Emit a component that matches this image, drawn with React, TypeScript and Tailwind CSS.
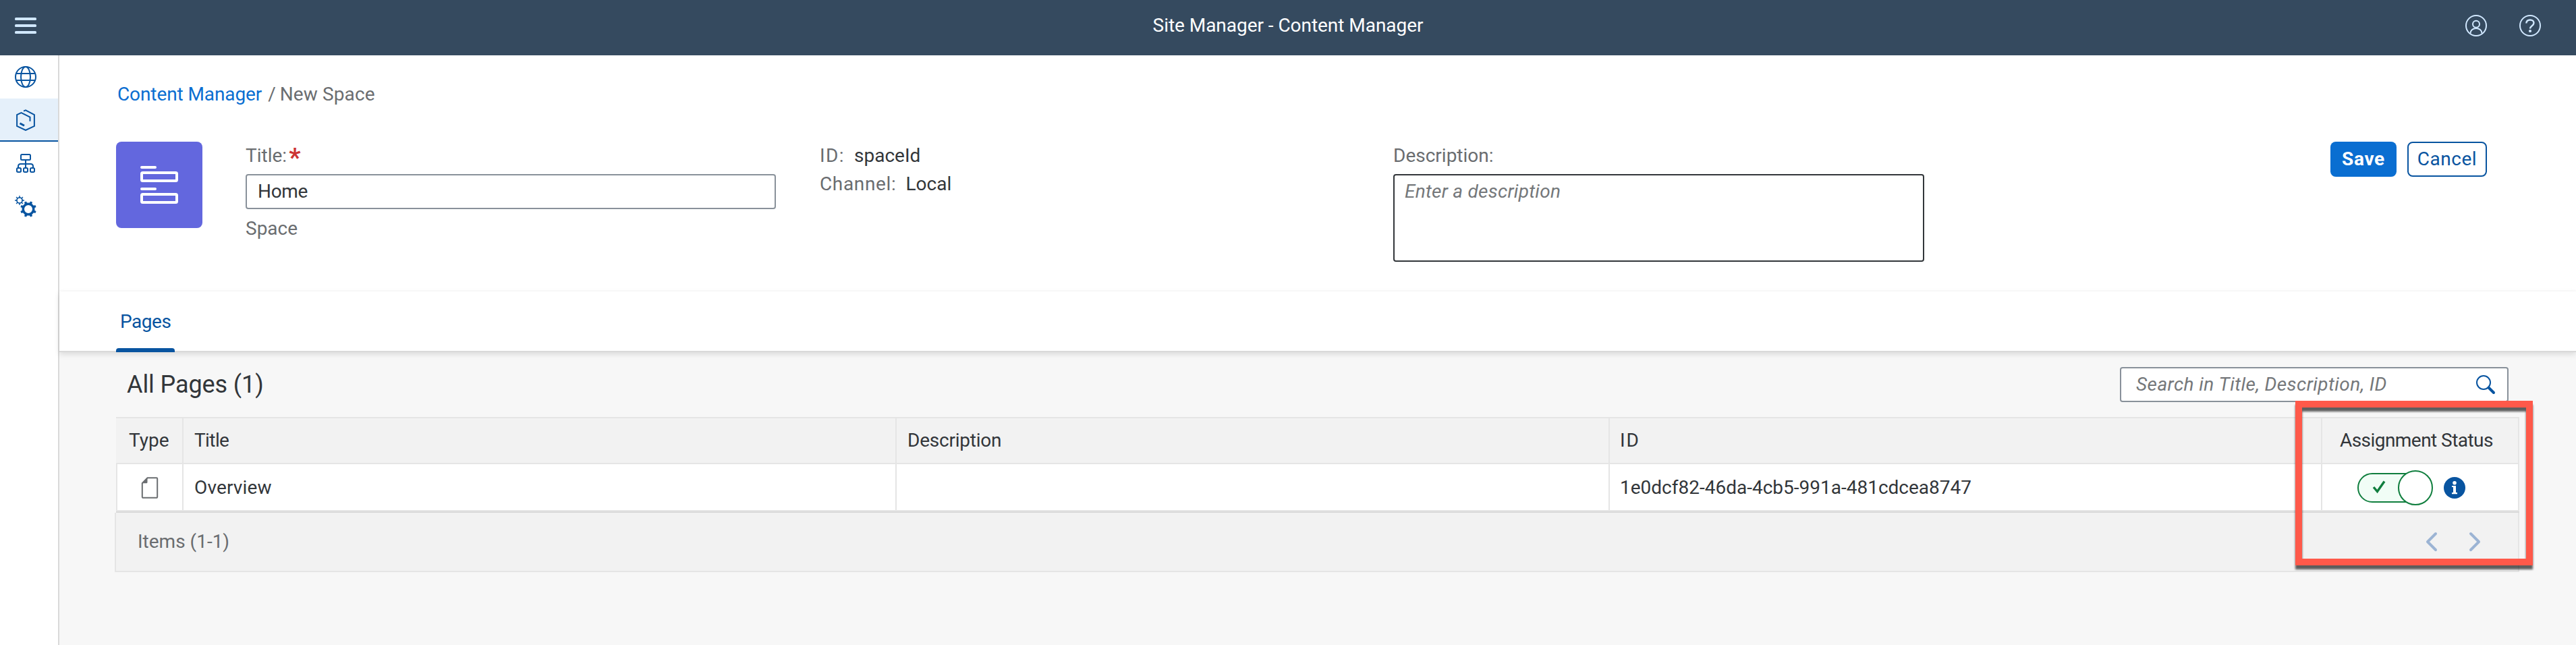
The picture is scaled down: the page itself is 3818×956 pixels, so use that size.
import type { ReactNode } from 'react';

function Icon({ children, className = '' }: { children: ReactNode; className?: string }) {
  return (
    <svg viewBox="0 0 32 32" fill="none" stroke="currentColor" strokeWidth="2" className={`size-8 shrink-0 ${className}`}>
      {children}
    </svg>
  );
}

function gearPath(cx: number, cy: number, outer: number, inner: number, teeth: number, offset: number, tip: number, root: number) {
  const step = (Math.PI * 2) / teeth;
  const at = (r: number, a: number) => `${(cx + r * Math.cos(a)).toFixed(2)} ${(cy + r * Math.sin(a)).toFixed(2)}`;
  let d = '';
  for (let i = 0; i < teeth; i++) {
    const a = i * step + offset;
    d += `${i ? 'L' : 'M'}${at(inner, a - step * root)}L${at(outer, a - step * tip)}L${at(outer, a + step * tip)}L${at(inner, a + step * root)}`;
  }
  return d + 'Z';
}

function ShellBar() {
  return (
    <header className="grid h-[82px] grid-cols-[1fr_auto_1fr] items-start bg-[#354a5f] pt-[22px] text-[#d1e8ff]">
      <Icon className="ml-[22px]">
        <g fill="currentColor" stroke="none">
          <rect x="0" y="4" width="32" height="4" rx="1.6" />
          <rect x="0" y="14" width="32" height="4" rx="1.6" />
          <rect x="0" y="24" width="32" height="4" rx="1.6" />
        </g>
      </Icon>
      <h1 className="tracking-[-0.04px] text-white">Site Manager - Content Manager</h1>
      <div className="flex justify-end gap-12 pr-[52px]">
        <Icon>
          <circle cx="16" cy="16" r="15" />
          <circle cx="16" cy="13.7" r="5" />
          <path d="M7.5 27.5c0-4.5 3.7-7.5 8.5-7.5s8.5 3 8.5 7.5" />
        </Icon>
        <Icon>
          <circle cx="16" cy="16" r="15" />
          <path d="M10.3 12.5C10.5 9.3 12.7 7.5 16 7.5c3.3 0 5.5 1.9 5.5 4.6 0 4.3-5.5 3.9-5.5 8.4" strokeWidth="2.4" />
          <circle cx="16" cy="24" r="2.1" fill="currentColor" stroke="none" />
        </Icon>
      </div>
    </header>
  );
}

function SideNav() {
  return (
    <nav className="w-[88px] shrink-0 border-r-2 border-[#d9d9d9] bg-white text-[#0854a0]">
      <div className="flex h-16 items-center pl-[22px]">
        <Icon>
          <circle cx="16" cy="16" r="15" />
          <ellipse cx="16" cy="16" rx="7" ry="15" />
          <path d="M2 11h28M2 21h28" />
        </Icon>
      </div>
      <div className="flex h-16 items-center border-b-2 border-[#0854a0] bg-[#e5f0fa] pl-[22px] pt-0.5">
        <Icon>
          <path d="M13 2.6 16 1.3 28.9 8v16.8L16 31 3.1 24.8V8.2L9.5 5.2 22.5 11.7v6" />
          <path d="M7.5 20.8 14 24.3" strokeWidth="3" />
        </Icon>
      </div>
      <div className="flex h-16 items-center pl-[22px]">
        <Icon>
          <rect x="9" y="3" width="14" height="8" rx="1.5" />
          <path d="M16 11v12M5 23v-2.5C5 18.5 6.5 17 8.5 17h15c2 0 3.5 1.5 3.5 3.5V23" />
          <rect x="3" y="23" width="6" height="6" rx="1.5" />
          <rect x="13" y="23" width="6" height="6" rx="1.5" />
          <rect x="23" y="23" width="6" height="6" rx="1.5" />
        </Icon>
      </div>
      <div className="flex h-16 items-center pl-[22px]">
        <Icon>
          <g fill="currentColor" stroke="none" fillRule="evenodd">
            <path d={gearPath(20, 20, 12, 9.6, 8, 0.39, 0.17, 0.24) + 'M20 14a6 6 0 1 0 0 12a6 6 0 1 0 0-12Z'} />
            <path d={gearPath(7, 7, 7, 5, 8, 0, 0.12, 0.18) + 'M7 3.8a3.2 3.2 0 1 0 0 6.4a3.2 3.2 0 1 0 0-6.4Z'} />
          </g>
        </Icon>
      </div>
    </nav>
  );
}

function ObjectHeader() {
  return (
    <section className="h-[350px] border-b-2 border-[#fcfcfc] bg-white pl-[84px] pt-[42px]">
      <div className="flex pl-0.5 text-[#6a6d70]">
        <a className="tracking-[-0.1px] text-[#0a6ed1]">Content Manager</a>
        <span className="ml-[9px]">/</span>
        <span className="ml-[6px] tracking-[0.12px]">New Space</span>
      </div>
      <div className="mt-[54px] flex items-start">
        <div className="grid size-32 place-items-center rounded-lg bg-[#6367de]">
          <svg viewBox="0 0 56 56" className="size-14 text-white" fill="none" stroke="currentColor" strokeWidth="4">
            <path d="M2 2h20M2 34h20" strokeLinecap="round" />
            <rect x="2" y="10" width="52" height="12" rx="1.5" />
            <rect x="2" y="42" width="52" height="12" rx="1.5" />
          </svg>
        </div>
        <div className="ml-16 w-[786px] pt-[5px] text-[#6a6d70]">
          <div className="flex h-8">
            <span>Title:</span>
            <span className="ml-[3px] mt-[3px] text-[38px] font-bold text-[#cc3333]">*</span>
          </div>
          <div className="mt-[11px] flex h-[52px] items-center rounded border-2 border-[#89919a] bg-white px-[16px] tracking-[-0.33px] text-[#32363a]">Home</div>
          <div className="mt-[13px]">Space</div>
        </div>
        <div className="ml-[65px] w-[850px] pt-[5px] text-[#6a6d70]">
          <div className="flex">
            <span className="tracking-[1.4px]">ID:</span>
            <span className="ml-[14px] text-[#32363a]">spaceId</span>
          </div>
          <div className="mt-[10px] flex">
            <span className="tracking-[0.65px]">Channel:</span>
            <span className="ml-[14px] text-[#32363a]">Local</span>
          </div>
        </div>
        <div className="w-[787px] pt-[5px] text-[#6a6d70]">
          <div>Description:</div>
          <div className="mt-[11px] h-[130px] rounded border-2 border-[#32363a] bg-white px-[15px] pt-2 italic tracking-[0.25px] text-[#74777a]">Enter a description</div>
        </div>
        <button className="ml-[602px] flex h-[52px] w-[98px] items-center justify-center rounded-lg bg-[#0a6ed1] font-bold tracking-[0.66px] text-white">Save</button>
        <button className="ml-4 flex h-[52px] w-[118px] items-center justify-center rounded-lg border-2 border-[#0854a0] bg-white tracking-[0.52px] text-[#0854a0]">Cancel</button>
      </div>
    </section>
  );
}

function Tabs() {
  return (
    <div className="relative h-[90px] border-b-2 border-[#d9d9d9] bg-white pl-[84px] pt-[29px] shadow-[0_3px_8px_rgba(0,0,0,0.12)]">
      <div className="relative h-[61px] w-[87px] pl-[6px] tracking-[-0.45px] text-[#0854a0]">
        Pages
        <div className="absolute bottom-0 left-0 h-[6px] w-full rounded-t bg-[#0854a0]" />
      </div>
    </div>
  );
}

function Toggle() {
  return (
    <div className="relative flex h-[52px] w-28 items-center text-[#107e3e]">
      <div className="flex h-11 w-[104px] items-center rounded-full border-2 border-[#107e3e] bg-[#f1fdf6] pl-[14px]">
        <Icon>
          <path d="M8 15l5.5 6.5L24 6.5" strokeWidth="3.4" />
        </Icon>
      </div>
      <div className="absolute right-0 top-0 size-[52px] rounded-full border-2 border-[#107e3e] bg-white" />
    </div>
  );
}

const cols = 'grid grid-cols-[100px_1057px_1057px_1056px_292px]';
const cell = 'flex items-center border-r-2 border-[#e5e5e5]';

function PagesTable() {
  return (
    <div className="mt-[22px]">
      <div className={`${cols} h-[70px] border-y-2 border-[#e5e5e5] bg-[#f2f2f2] text-[#32363a]`}>
        <div className={`${cell} pl-[19px]`}>Type</div>
        <div className={`${cell} pl-4 tracking-[-0.6px]`}>Title</div>
        <div className={`${cell} pl-[16px] tracking-[-0.23px]`}>Description</div>
        <div className={`${cell} pl-[15px] tracking-[2px]`}>ID</div>
        <div className={`${cell} pl-[26px] tracking-[-0.55px]`}>Assignment Status</div>
      </div>
      <div className={`${cols} h-[70px] border-b-2 border-[#e5e5e5] bg-white text-[#32363a]`}>
        <div className={`${cell} border-l-2 pl-[32px] pt-0.5 text-[#6a6d70]`}>
          <Icon>
            <path d="M12.5 1.2H26a1.2 1.2 0 0 1 1.2 1.2v27.2a1.2 1.2 0 0 1-1.2 1.2H6a1.2 1.2 0 0 1-1.2-1.2V9.2Z" />
            <path d="M12.5 1.2v6.5a1.5 1.5 0 0 1-1.5 1.5H4.8Z" fill="currentColor" stroke="none" />
          </Icon>
        </div>
        <div className={`${cell} pl-4 pt-0.5 tracking-[0.15px]`}>Overview</div>
        <div className={cell} />
        <div className={`${cell} pl-[15px] pt-0.5`}>1e0dcf82-46da-4cb5-991a-481cdcea8747</div>
        <div className={`${cell} gap-4 pl-[52px] pt-0.5`}>
          <Toggle />
          <Icon className="text-[#0854a0]">
            <circle cx="16" cy="16" r="16" fill="currentColor" stroke="none" />
            <g fill="#fff" stroke="none">
              <circle cx="16" cy="8.7" r="2.8" />
              <path d="M12 13h6v10h2v2.2h-8V23h2v-8h-2z" />
            </g>
          </Icon>
        </div>
      </div>
      <div className="h-0.5 bg-[#d9d9d9]" />
      <div className="-ml-0.5 flex h-[88px] items-center justify-between border-2 border-t-0 border-[#e5e5e5] bg-[#f2f2f2] pl-8 pr-12 text-[#6a6d70]">
        <span>Items (1-1)</span>
        <div className="flex gap-8 text-[#9cb4d4]">
          <Icon><path d="M22 4 10 16l12 12" strokeWidth="4" strokeLinecap="round" strokeLinejoin="round" /></Icon>
          <Icon><path d="M10 4l12 12-12 12" strokeWidth="4" strokeLinecap="round" strokeLinejoin="round" /></Icon>
        </div>
      </div>
    </div>
  );
}

export default function App() {
  return (
    <div className="relative flex h-[956px] w-[3818px] flex-col overflow-hidden bg-[#f7f7f7] font-['Roboto',sans-serif] text-[28px] leading-8 whitespace-nowrap">
      <ShellBar />
      <div className="flex min-h-0 flex-1">
        <SideNav />
        <main className="flex-1">
          <ObjectHeader />
          <Tabs />
          <section className="px-[84px] pt-[22px]">
            <div className="flex h-[52px] items-start justify-between px-4">
              <h2 className="mt-[6px] text-[36px] leading-10 tracking-[-0.1px] text-[#32363a]">All Pages (1)</h2>
              <div className="flex h-[52px] w-[576px] items-center justify-between rounded border-2 border-[#89919a] bg-white pl-[22px] pr-4">
                <span className="italic tracking-[0.43px] text-[#74777a]">Search in Title, Description, ID</span>
                <Icon className="text-[#0854a0]">
                  <circle cx="13" cy="13" r="10" />
                  <path d="M20.5 20.5l7.5 7.5" strokeWidth="4" strokeLinecap="round" />
                </Icon>
              </div>
            </div>
            <PagesTable />
          </section>
        </main>
      </div>
      <div className="absolute left-[3402px] top-[594px] h-[244px] w-[352px] border-[10px] border-[#ff594a] drop-shadow-[0_6px_1.5px_rgba(0,0,0,0.62)]" />
    </div>
  );
}
